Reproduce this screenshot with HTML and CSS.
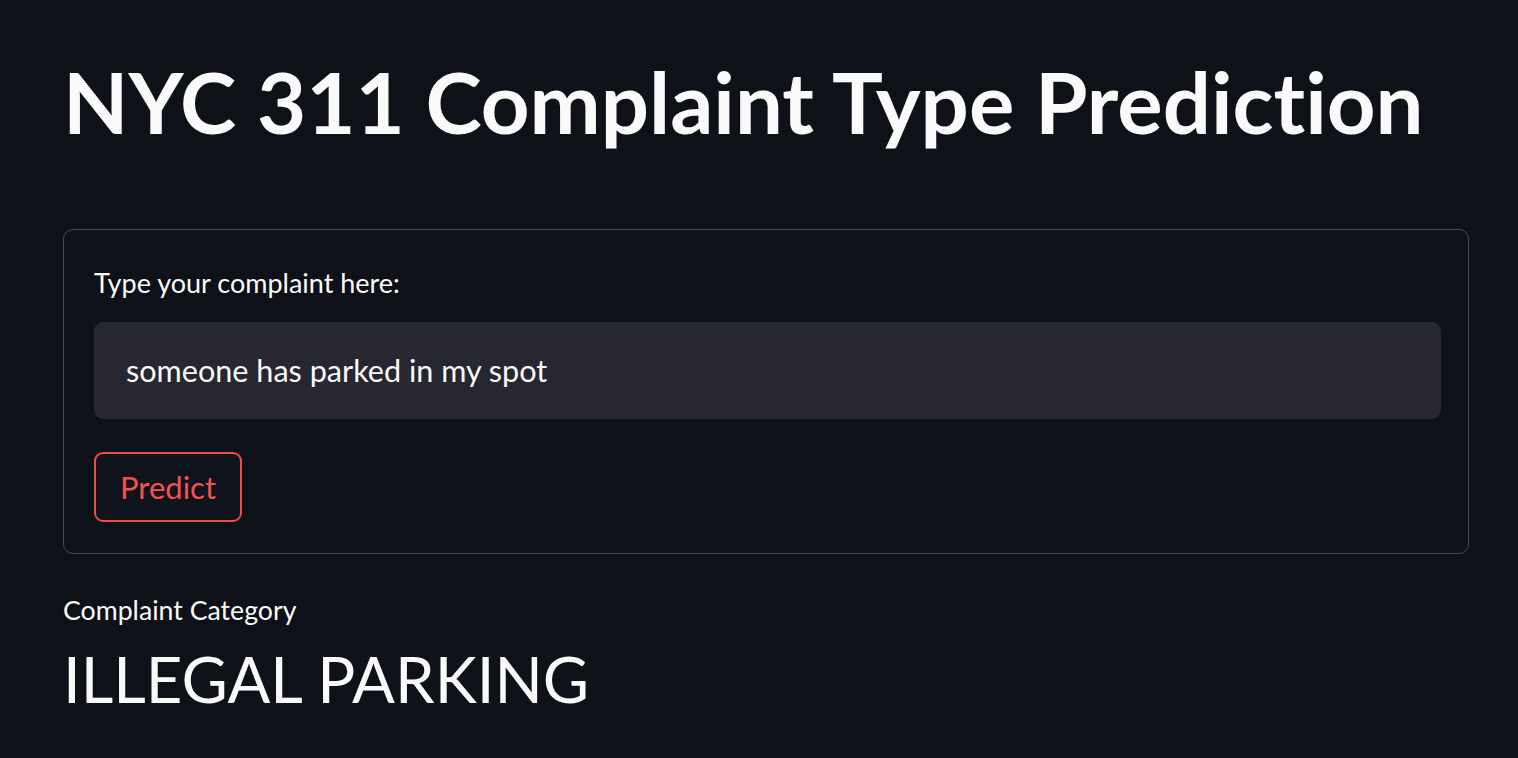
FILE: index.html
```html
<!DOCTYPE html>
<html lang="en">

<head>
    <meta charset="UTF-8">
    <title>NYC 311 Complaint Type Prediction</title>
    <link rel="stylesheet" href="styles.css">
</head>

<body>
    <div class="main">
        <h1>NYC 311 Complaint Type Prediction</h1>

        <form class="form" id="complaintForm">
            <label for="complaint">Type your complaint here:</label>
            <input type="text" id="complaint" name="complaint" value="someone has parked in my spot">
            <div class="actions">
                <button type="button">Predict</button>
            </div>
        </form>

        <div class="metric">
            <div class="metric-label">Complaint Category</div>
            <div class="metric-value">ILLEGAL PARKING</div>
        </div>
    </div>
</body>

</html>
```

FILE: styles.css
```css
body {
    margin: 0;
    background: #0e1117;
    color: #fafafa;
    font-family: "Source Sans Pro", Lato, sans-serif;
    font-variant-ligatures: none;
}

.main {
    padding: 51px 49px 0 63px;
}

h1 {
    margin: 0;
    font-size: 85px;
    line-height: 100px;
    font-weight: 700;
}

.form {
    margin-top: 78px;
    border: 1.5px solid #4a4c52;
    border-radius: 10px;
    padding: 33px 27px 31px 30px;
    display: flex;
    flex-direction: column;
}

label {
    font-size: 27px;
    line-height: 40px;
}

input[type="text"] {
    margin-top: 19px;
    height: 97px;
    box-sizing: border-box;
    padding: 0 32px;
    border: none;
    border-radius: 9px;
    background: #262730;
    color: #fafafa;
    font-family: inherit;
    font-variant-ligatures: none;
    font-size: 30.6px;
    outline: none;
}

.actions {
    margin-top: 33px;
}

button {
    width: 148px;
    height: 70px;
    box-sizing: border-box;
    border: 2px solid #e5504e;
    border-radius: 9px;
    background: #0f131b;
    color: #f5524f;
    font-family: inherit;
    font-size: 31px;
    cursor: pointer;
}

.metric {
    margin-top: 38px;
}

.metric-label {
    font-size: 26.7px;
    line-height: 36px;
}

.metric-value {
    margin-top: 11px;
    font-size: 63.4px;
    line-height: 80px;
}
```
